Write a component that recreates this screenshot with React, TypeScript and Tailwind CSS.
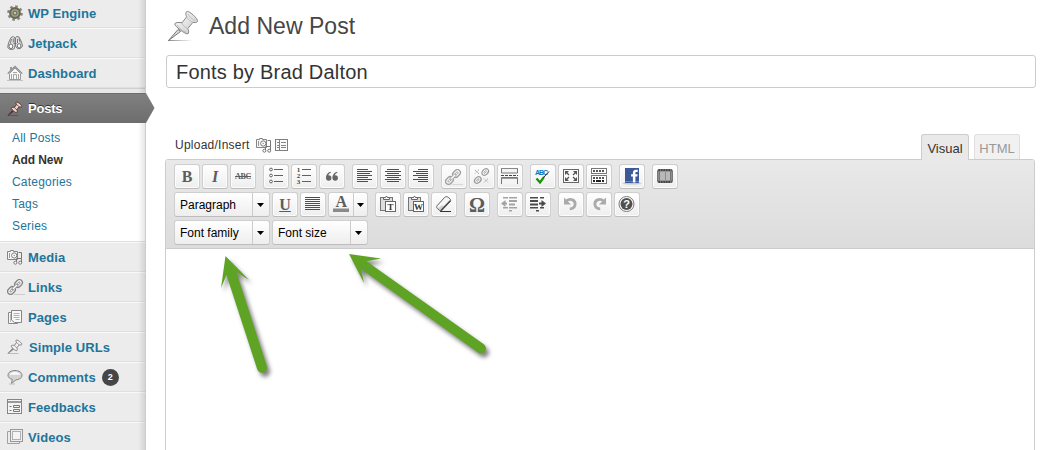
import React from "react";

type IconProps = { children: React.ReactNode; w?: number; h?: number };

const Svg = ({ children, w = 24, h = 23 }: IconProps) => (
  <svg width={w} height={h} viewBox={`0 0 ${w} ${h}`} fill="none" className="block shrink-0">
    {children}
  </svg>
);

/* ---------- sidebar icons (16 x 16) ---------- */

const Gear = () => (
  <Svg w={16} h={16}>
    <circle cx="8" cy="8" r="6.6" stroke="#85857e" strokeWidth="2.4" strokeDasharray="2.6 2.58" />
    <circle cx="8" cy="8" r="5" fill="#77776c" stroke="#66665e" strokeWidth="1.8" />
    <circle cx="8" cy="8" r="3.1" stroke="#a5a66f" strokeWidth="1.2" />
    <circle cx="8" cy="8" r="1.1" fill="#d6d6c4" />
  </Svg>
);

const Binoculars = () => (
  <Svg w={16} h={16}>
    <path d="M4 2.5l2.5-1 1.5 1.5v8l-1 3-4 .5-2.300-2L1.500 8zM9.500 1.500l2.500.5 2.500 5 1 4-2 2.500-3 .2-2-2.700V3z" fill="#e4e4e4" stroke="#7c7c7c" />
    <path d="M4.500 4L3.300 8.500M6.300 3.500v4M10.500 4v4M12 3.500l1.200 4M6.500 8.500h3" stroke="#777" />
    <ellipse cx="3.900" cy="11.300" rx="1.900" ry="2.300" fill="#fff" stroke="#6c6c6c" />
    <ellipse cx="12.100" cy="10.800" rx="1.800" ry="2.200" fill="#fff" stroke="#6c6c6c" />
  </Svg>
);

const House = () => (
  <Svg w={16} h={16}>
    <path d="M2.500 8.500v6h11v-6L8 3z" fill="#f7f7f7" stroke="#999" />
    <path d="M.7 8.600L8 1.500l7.300 7.100" stroke="#8c8c8c" strokeWidth="1.300" />
    <path d="M3.500 2v3.500M4.500 2v2.500" stroke="#999" />
    <path d="M6.500 14V9.500h3V14M4.500 9v5M11.500 9v5M6 7.500h4" stroke="#a5a5a5" />
    <path d="M0 15.500h16" stroke="#c3c3c3" />
  </Svg>
);

const Pin = ({ fill = "#f2f2f2", stroke = "#808080" }: { fill?: string; stroke?: string }) => (
  <Svg w={16} h={16}>
    <path d="M.5 14.500h11" stroke={stroke} opacity=".45" />
    <path d="M5.700 9.200L1.300 14.200l5-3.800z" fill={stroke} stroke={stroke} strokeWidth=".8" />
    <path d="M9.300 1.100c1-.8 6 3.200 5.600 4.300-.5.900-1.700.6-2.500.4L9.900 8.600c.5 1.200.5 2.700-.2 3.100-1 .4-6-3.800-5.500-4.800.4-.7 2.100-.8 3.100-.4l2.200-2.900c-.5-.7-.7-2-.2-2.500z" fill={fill} stroke={stroke} />
    <path d="M7.300 6.700l2.500 2M9.700 3.600l2.500 2.300" stroke={stroke} strokeWidth=".7" />
  </Svg>
);

const CameraNotes = () => (
  <Svg w={16} h={16}>
    <path d="M.5 2.500h3v-1h3v1h4v8H.5z" fill="#f5f5f5" stroke="#858585" />
    <circle cx="7.200" cy="6.500" r="2.600" fill="#fff" stroke="#7a7a7a" />
    <circle cx="7.200" cy="6.500" r=".8" fill="#999" />
    <path d="M2.500 4v5" stroke="#999" />
    <path d="M9.500 14V9.500h5V14M14.500 9.500v-6h-3" stroke="#777" />
    <circle cx="8.400" cy="13.700" r="1.500" fill="#fff" stroke="#777" />
    <circle cx="13.200" cy="13.700" r="1.500" fill="#fff" stroke="#777" />
  </Svg>
);

const Chain = ({ color = "#858585" }: { color?: string }) => (
  <Svg w={18} h={16}>
    <path d="M7 15.500h11" stroke={color} opacity=".3" />
    <g transform="rotate(-45 8 8)" stroke={color}>
      <rect x="-1.200" y="5" width="8.400" height="6" rx="3" strokeWidth="1.300" fill="#f4f4f4" />
      <rect x="1.200" y="7.200" width="3.600" height="1.600" rx=".8" strokeWidth=".9" />
      <rect x="8.800" y="5" width="8.400" height="6" rx="3" strokeWidth="1.300" fill="#f4f4f4" />
      <rect x="11.200" y="7.200" width="3.600" height="1.600" rx=".8" strokeWidth=".9" />
      <rect x="4.500" y="6.900" width="7" height="2.200" rx="1.100" fill="#fff" strokeWidth=".9" />
    </g>
  </Svg>
);

const Pages = () => (
  <Svg w={16} h={16}>
    <path d="M4 3.500H1.500v11h9V13" fill="#f4f4f4" stroke="#8a8a8a" />
    <path d="M4.500 1.500h10v12h-7l-3-2.500z" fill="#f8f8f8" stroke="#858585" />
    <path d="M6.500 4.500h6M6.500 6.500h6M6.500 8.500h6M8.500 10.500h4" stroke="#b0b0b0" />
    <path d="M3.500 5v8" stroke="#bbb" />
  </Svg>
);

const Bubble = () => (
  <Svg w={16} h={16}>
    <path d="M8 1.500c4 0 7 2 7 4.700s-2.700 4.500-6 4.600L4.500 14.500l.8-4.100C2.700 9.700 1 8.300 1 6.200 1 3.500 4 1.500 8 1.500z" fill="#d3d3d3" stroke="#858585" />
    <path d="M2.700 5.800C3.200 3.700 5.500 2.900 8 2.900s4.900 1 5.300 2.900z" fill="#fafafa" />
    <path d="M2 15h6" stroke="#bbb" />
  </Svg>
);

const FormIcon = () => (
  <Svg w={16} h={16}>
    <rect x=".5" y=".5" width="14" height="14" fill="#f4f4f4" stroke="#858585" />
    <path d="M1 2.500h13M1 3.500h13" stroke="#999" />
    <path d="M2.500 7.500h2M2.500 11.500h2" stroke="#777" />
    <path d="M6.500 6.500h6v2h-6zM6.500 10.500h6v2h-6z" stroke="#777" />
  </Svg>
);

const Frames = () => (
  <Svg w={16} h={16}>
    <path d="M3.500 2.500h-3v12h12v-2" stroke="#a0a0a0" />
    <rect x="3.500" y=".5" width="12" height="12" fill="#eee" stroke="#979797" />
    <rect x="5.500" y="2.500" width="8" height="8" fill="#f4f4f4" stroke="#b0b0b0" />
  </Svg>
);

/* ---------- sidebar ---------- */

const MenuRow = ({ icon, label, badge, indent }: { icon: React.ReactNode; label: string; badge?: string; indent?: boolean }) => (
  <div className="flex h-[30px] shrink-0 items-center border-t border-b border-t-[#f9f9f9] border-b-[#dfdfdf] bg-[#ececec] pl-[7px]">
    <span className="w-[18px] shrink-0">{icon}</span>
    <span className={`${indent ? "ml-1" : "ml-[3px]"} pt-[2px] whitespace-nowrap text-[13px] leading-[18px] font-bold tracking-[0.08px] text-[#21759b]`}>{label}</span>
    {badge && (
      <span className="mt-px ml-[6px] flex size-[17px] items-center justify-center rounded-full bg-[#464646] pt-px text-[9px] font-bold text-white">{badge}</span>
    )}
  </div>
);

const submenu = ["All Posts", "Add New", "Categories", "Tags", "Series"];

const Sidebar = () => (
  <aside className="relative -mt-[2px] flex h-[452px] w-[146px] shrink-0 flex-col border-r border-[#ccc] bg-white">
    <MenuRow icon={<Gear />} label="WP Engine" />
    <MenuRow icon={<Binoculars />} label="Jetpack" />
    <MenuRow icon={<House />} label="Dashboard" />
    <div className="h-[5px] shrink-0 border-t border-[#d0d0d0] bg-[#e8e8e8]" />
    <div className="z-10 flex h-[30px] shrink-0 items-center border-t border-[#6d6d6d] bg-linear-to-b from-[#808080] to-[#6d6d6d] pl-[7px]">
      <span className="w-[18px]"><Pin fill="#ecd3cd" stroke="#4d302d" /></span>
      <span className="ml-[3px] text-[13px] font-bold tracking-[-0.2px] text-white [text-shadow:0_-1px_0_#333]">Posts</span>
    </div>
    <svg className="absolute top-[95px] left-[145px] z-10" width="10" height="30" viewBox="0 0 10 30">
      <defs>
        <linearGradient id="tab" x1="0" x2="0" y1="0" y2="1">
          <stop stopColor="#808080" />
          <stop offset="1" stopColor="#6d6d6d" />
        </linearGradient>
      </defs>
      <path d="M0 0h1l8.500 15L1 30H0z" fill="url(#tab)" />
    </svg>
    <ul className="h-[119px] shrink-0 border-b border-[#dfdfdf] pt-1 pl-3 text-[12px] leading-[22px] tracking-[0.2px] text-[#21759b]">
      {submenu.map((s) => (
        <li key={s} className={s === "Add New" ? "font-bold tracking-[-0.1px] text-[#333]" : ""}>{s}</li>
      ))}
    </ul>
    <MenuRow icon={<CameraNotes />} label="Media" />
    <MenuRow icon={<Chain />} label="Links" />
    <MenuRow icon={<Pages />} label="Pages" />
    <MenuRow icon={<Pin />} label="Simple URLs" indent />
    <MenuRow icon={<Bubble />} label="Comments" badge="2" />
    <MenuRow icon={<FormIcon />} label="Feedbacks" />
    <MenuRow icon={<Frames />} label="Videos" />
    <div className="absolute inset-y-0 right-0 w-[7px] bg-linear-to-r from-black/0 to-black/10" />
  </aside>
);

/* ---------- toolbar ---------- */

const Btn = ({ children }: { children: React.ReactNode }) => (
  <div className="flex h-[25px] w-[26px] shrink-0 items-center justify-center rounded-[3px] border border-[#cfcfcf] border-b-[#bdbdbd] bg-linear-to-b from-white to-[#eee] shadow-[inset_0_0_0_1px_#fcfcfc]">
    {children}
  </div>
);

const Group = ({ children }: { children: React.ReactNode }) => <div className="flex gap-[2px]">{children}</div>;

const Caret = () => (
  <svg width="7" height="4" viewBox="0 0 7 4" className="block"><path d="M0 0h7L3.500 4z" fill="#000" /></svg>
);

const Select = ({ label }: { label: string }) => (
  <div className="flex h-[25px] w-[96px] shrink-0 rounded-[3px] border border-[#cfcfcf] border-b-[#bdbdbd] bg-linear-to-b from-white to-[#eee]">
    <span className="flex w-[78px] items-center border-r border-[#ccc] pl-[5px] text-[12px] whitespace-nowrap text-black">{label}</span>
    <span className="flex flex-1 items-center justify-center pt-px pr-px"><Caret /></span>
  </div>
);

const Glyph = ({ children, className }: { children: React.ReactNode; className: string }) => (
  <span className={`font-['Liberation_Serif',serif] text-[#5c5c5c] ${className}`}>{children}</span>
);

const Bold = () => <Glyph className="text-[16px] leading-[18px] font-bold">B</Glyph>;
const Italic = () => <Glyph className="text-[16px] leading-[18px] font-bold italic">I</Glyph>;
const Strike = () => <Glyph className="text-[8px] leading-[12px] font-bold tracking-[-0.3px] line-through">ABC</Glyph>;

const rows = [4.5, 10.5, 16.5];

const Bullets = () => (
  <Svg>
    {rows.map((y) => (
      <g key={y} stroke="#606060">
        <circle cx="7" cy={y} r="1.400" fill="#fff" />
        <path d={`M10 ${y}h9`} />
      </g>
    ))}
  </Svg>
);

const Numbers = () => (
  <Svg>
    <text fontSize="7" fontWeight="bold" fill="#444" fontFamily="Liberation Serif, serif">
      {rows.map((y, i) => (
        <tspan key={y} x="4.800" y={y + 2.4}>{i + 1}</tspan>
      ))}
    </text>
    {rows.map((y) => (
      <path key={y} d={`M10 ${y}h9`} stroke="#606060" />
    ))}
  </Svg>
);

const Quote = () => (
  <Svg>
    <g fill="#666">
      <circle cx="8.700" cy="13" r="2.700" />
      <circle cx="15.200" cy="13" r="2.700" />
      <path d="M6 13c0-3.300 1.500-5.600 4.700-6.300l.3.700c-1.800.8-2.700 1.900-2.900 3.800zM12.500 13c0-3.300 1.500-5.600 4.700-6.300l.3.700c-1.800.8-2.700 1.900-2.900 3.800z" />
    </g>
  </Svg>
);

const lineSets: Record<string, [number, number][]> = {
  left: [[4, 15], [4, 19], [4, 17], [4, 19], [4, 15], [4, 19], [4, 15]],
  center: [[6, 18], [4, 20], [6, 18], [4, 20], [6, 18], [4, 20], [6, 18]],
  right: [[9, 19], [4, 19], [7, 19], [4, 19], [9, 19], [4, 19], [9, 19]],
  full: [[4, 19], [4, 19], [4, 19], [4, 19], [4, 19], [4, 19], [4, 19]],
};

const Align = ({ kind }: { kind: string }) => (
  <Svg>
    {lineSets[kind].map(([a, b], i) => (
      <path key={i} d={`M${a} ${4.5 + i * 2}H${b}`} stroke="#4d4d4d" />
    ))}
  </Svg>
);

const Unlink = () => (
  <Svg>
    <g stroke="#999">
      <ellipse cx="15.200" cy="7" rx="3.700" ry="2.700" transform="rotate(-45 15.200 7)" strokeWidth="1.300" />
      <ellipse cx="15.200" cy="7" rx="1.500" ry=".8" transform="rotate(-45 15.200 7)" strokeWidth=".8" />
      <ellipse cx="7.800" cy="15" rx="3.700" ry="2.700" transform="rotate(-45 7.800 15)" strokeWidth="1.300" />
      <ellipse cx="7.800" cy="15" rx="1.500" ry=".8" transform="rotate(-45 7.800 15)" strokeWidth=".8" />
      <path d="M5 5l4 4M9 4.500L5 8.500M14 13.500l4 4M18 13.500l-4 4" strokeDasharray="1.500 .7" strokeWidth=".9" />
    </g>
  </Svg>
);

const More = () => (
  <Svg>
    <path d="M3.500 3v5h16V3M3.500 19v-6.500h16V19" fill="#f4f4f4" stroke="#777" />
    <path d="M3 3.500h17" stroke="#888" />
    <path d="M3 10.500h17" stroke="#444" strokeDasharray="3 1" />
    <path d="M4 13.500h15" stroke="#999" />
  </Svg>
);

const Spell = () => (
  <Svg>
    <text x="4" y="9.500" fontSize="7" fontWeight="bold" fill="#0878c0" fontFamily="Liberation Sans, sans-serif" textLength="13">ABC</text>
    <path d="M5.500 13.500l3.500 4 4-5.500" stroke="#159300" strokeWidth="2.200" />
    <path d="M12.500 12.500l5.500-6" stroke="#222" />
  </Svg>
);

const Fullscreen = () => (
  <Svg>
    <rect x="4.500" y="4.500" width="15" height="13" fill="#fafafa" stroke="#666" />
    <path d="M6 6h4L6 10zM18 6h-4l4 4zM6 16h4l-4-4zM18 16h-4l4-4z" fill="#555" />
    <path d="M7 7l3 3M17 7l-3 3M7 15l3-3M17 15l-3-3" stroke="#555" strokeWidth="1.300" />
  </Svg>
);

const Kitchen = () => (
  <Svg>
    <rect x="4.500" y="3.500" width="15" height="5" fill="#fff" stroke="#777" />
    <path d="M6 6h12" stroke="#555" strokeWidth="2" strokeDasharray="2 1" />
    <rect x="4.500" y="10.500" width="15" height="8" fill="#fff" stroke="#777" />
    <path d="M6 13h12" stroke="#555" strokeWidth="2" strokeDasharray="2 1" />
    <path d="M6 16h12" stroke="#222" strokeWidth="2" strokeDasharray="2 1 5 1" />
  </Svg>
);

const Facebook = () => (
  <Svg>
    <ellipse cx="12" cy="18.300" rx="9.500" ry="1.200" fill="#c9c9c9" />
    <rect x="5" y="3" width="14" height="15" fill="#3b5998" />
    <path d="M5 16h14v1H5z" fill="#6d84b4" />
    <path d="M12.900 17.500v-6h-1.800V9.300h1.800V7.800c0-2 1.200-3 3-3h1.800V7h-1.200c-.9 0-1.100.3-1.100 1v1.300h2.200l-.3 2.200h-1.900v6z" fill="#fff" />
  </Svg>
);

const Film = () => (
  <Svg>
    <rect x="4" y="4" width="16" height="14" rx="2.500" fill="#777" />
    <path d="M5.500 5h13M5.500 17h13" stroke="#333" strokeWidth="1.500" strokeDasharray="1.500 1" />
    <rect x="7" y="6.500" width="10" height="9" fill="#b8b8b8" />
    <path d="M5.500 7v8M12.500 6.500v9M18.500 7v8" stroke="#8d8d8d" />
  </Svg>
);

const TextColor = () => (
  <Svg w={22}>
    <text x="4.500" y="14" fontSize="16" fontWeight="bold" fill="#5c5c5c" fontFamily="Liberation Serif, serif">A</text>
    <rect x="2" y="15.500" width="16" height="3.500" fill="#8a8a8a" />
  </Svg>
);

const Paste = ({ letter }: { letter: string }) => (
  <Svg>
    <rect x="4.500" y="4.500" width="12" height="13" fill="#ddd" stroke="#757575" />
    <path d="M7.500 6.500v-2h2l1-1.500 1 1.500h2v2z" fill="#f4f4f4" stroke="#666" />
    <rect x="9.500" y="8.500" width="10" height="10" fill="#fff" stroke="#666" />
    <text x="14.500" y="16.500" textAnchor="middle" fontSize="9" fontWeight="bold" fill="#333" fontFamily="Liberation Serif, serif">{letter}</text>
  </Svg>
);

const Eraser = () => (
  <Svg>
    <path d="M8 18.500h11" stroke="#333" />
    <path d="M12.500 4.500L5 12.800c-.6.900-.3 2 .4 2.700l1.800 1.700c.9.700 2.100.6 2.900-.2l8.200-8.700c.6-.8.4-1.700-.2-2.300l-1.900-1.700c-1-.9-2.800-.8-3.700.2z" fill="#f6f6f6" stroke="#606060" />
    <path d="M10 12.300l-4.500 3.200 2 2 3 0 3.500-4z" fill="#8d8d8d" opacity=".35" />
    <path d="M8.800 17.700l9.500-10" stroke="#4c4c4c" strokeWidth="1.600" />
  </Svg>
);

const Omega = () => <Glyph className="text-[20px] leading-[20px] font-bold">Ω</Glyph>;

const Dent = ({ out }: { out?: boolean }) => (
  <Svg>
    <g fill={out ? "#a3a3a3" : "#4a4a4a"}>
      {out ? (
        <>
          <path d="M3 10.500L7.500 7v2.500H9v2H7.500V14z" />
          <path d="M5 4h5v1.500H5zM11 4h8v1.500h-8zM11 7h8v2h-8zM11 10.500h6v2h-6zM11 14h8v1.500h-8zM5 14h5v1.500H5zM11 17h3v1.500h-3z" />
        </>
      ) : (
        <>
          <path d="M20 10.500L15.500 7v2.500H13v2h2.500V14z" />
          <path d="M4 4h8v1.500H4zM14 4h4v1.500h-4zM4 7h8v2H4zM4 10.500h8v2H4zM4 14h8v1.500H4zM14 14h4v1.500h-4zM10 17h3v1.500h-3z" />
        </>
      )}
    </g>
  </Svg>
);

const UndoPath = () => (
  <g>
    <path d="M7.500 8c3.500-3.200 9.300-1 8.600 3.600-.4 2.600-2.400 4.200-5.300 4.200" stroke="#aaa" strokeWidth="2.800" />
    <path d="M5 4.500v7h7z" fill="#aaa" />
  </g>
);

const Undo = () => <Svg><UndoPath /></Svg>;
const Redo = () => <Svg><g transform="translate(24 0) scale(-1 1)"><UndoPath /></g></Svg>;

const Help = () => (
  <Svg>
    <circle cx="11.500" cy="11" r="7.500" fill="#fff" stroke="#777" />
    <circle cx="11.500" cy="11" r="6" fill="#505050" />
    <text x="11.500" y="15" textAnchor="middle" fontSize="11" fontWeight="bold" fill="#fff" fontFamily="Liberation Sans, sans-serif">?</text>
  </Svg>
);

const Toolbar = () => (
  <div className="flex h-[89px] flex-col gap-[3px] rounded-t-[3px] border-b border-[#ccc] bg-linear-to-b from-[#e9e9e9] to-[#dcdcdc] pt-1 pl-2">
    <div className="flex gap-[7px]">
      <Group><Btn><Bold /></Btn><Btn><Italic /></Btn><Btn><Strike /></Btn></Group>
      <Group><Btn><Bullets /></Btn><Btn><Numbers /></Btn><Btn><Quote /></Btn></Group>
      <Group><Btn><Align kind="left" /></Btn><Btn><Align kind="center" /></Btn><Btn><Align kind="right" /></Btn></Group>
      <Group><Btn><Chain color="#a0a0a0" /></Btn><Btn><Unlink /></Btn><Btn><More /></Btn></Group>
      <Group><Btn><Spell /></Btn><Btn><Fullscreen /></Btn><Btn><Kitchen /></Btn></Group>
      <Btn><Facebook /></Btn>
      <Btn><Film /></Btn>
    </div>
    <div className="flex gap-[7px]">
      <Group>
        <Select label="Paragraph" />
        <Btn><Glyph className="text-[16px] leading-[18px] font-bold underline">U</Glyph></Btn>
        <Btn><Align kind="full" /></Btn>
        <div className="flex h-[25px] w-[40px] rounded-[3px] border border-[#cfcfcf] border-b-[#bdbdbd] bg-linear-to-b from-white to-[#eee]">
          <span className="w-[25px] border-r border-[#ccc] pl-[2px]"><TextColor /></span>
          <span className="flex flex-1 items-center justify-center pt-px pr-px"><Caret /></span>
        </div>
      </Group>
      <Group><Btn><Paste letter="T" /></Btn><Btn><Paste letter="W" /></Btn><Btn><Eraser /></Btn></Group>
      <Btn><Omega /></Btn>
      <Group><Btn><Dent out /></Btn><Btn><Dent /></Btn></Group>
      <Group><Btn><Undo /></Btn><Btn><Redo /></Btn><Btn><Help /></Btn></Group>
    </div>
    <Group><Select label="Font family" /><Select label="Font size" /></Group>
  </div>
);

const LargePin = () => (
  <svg width="32" height="32" viewBox="0 0 32 32" fill="none" className="block">
    <defs>
      <linearGradient id="pin" x1="0" x2="1" y1="0" y2="1">
        <stop stopColor="#fff" />
        <stop offset="1" stopColor="#c8c8c8" />
      </linearGradient>
      <linearGradient id="ground" x1="0" x2="1">
        <stop stopColor="#888" />
        <stop offset="1" stopColor="#fff" />
      </linearGradient>
    </defs>
    <rect x="1" y="30" width="25" height="1" fill="url(#ground)" />
    <path d="M11 19.500L1.500 30.500l12-9z" fill="#ddd" stroke="#777" />
    <path d="M19.500 1.700c2-2 12 7.300 11 9.800-.8 1.600-3.500 1-4.500.8l-5.200 6.200c1 2.200 1.200 4.600.2 5.300-2.200 1-14-7.800-13.200-10.100.8-1.500 5-1.500 7.200-.9l4.700-6c-1-1.600-1.100-4.100-.2-5.100z" fill="url(#pin)" stroke="#868686" />
    <path d="M14.800 13c1 2.500 3.500 4.700 6 5.500M19.700 7c1.200 2.200 3.800 4.500 6.300 5.300M21 4c1 2.500 4.500 5.700 7.500 6.700M10 15c2 3 6 6 9.500 7.300" stroke="#b8b8b8" strokeWidth=".9" />
  </svg>
);

const Arrows = () => (
  <svg
    width="300"
    height="140"
    viewBox="200 245 300 140"
    className="absolute top-[245px] left-[200px] drop-shadow-[3px_4px_2px_rgba(0,0,0,0.5)]"
    fill="#5fa325"
  >
    <path d="M225.500 256L249 280l-12.700-8 30.500 94a5 5 0 0 1-9.600 3.300L226.500 275 221 288z" />
    <path d="M349 254l32 4.500-14.500 2.700 117.300 83.100a5 5 0 0 1-5.800 8.200L361 269l3 14z" />
  </svg>
);

export default function App() {
  return (
    <div className="relative flex h-[450px] w-[1050px] overflow-hidden bg-white font-['Liberation_Sans',Arial,sans-serif]">
      <Sidebar />
      <main className="flex min-w-0 flex-1 flex-col">
        <div className="flex h-[55px] shrink-0 items-center pl-[21px]">
          <span className="mt-[-3px]"><LargePin /></span>
          <h1 className="mt-[-2px] ml-[10px] text-[23px] font-normal tracking-[0.03px] text-[#464646]">Add New Post</h1>
        </div>
        <div className="ml-5 flex h-[33px] w-[870px] shrink-0 items-center rounded-[3px] border border-[#ccc] pt-px pl-[9px] text-[20px] tracking-[0.2px] text-[#333]">Fonts by Brad Dalton</div>
        <div className="mt-[46px] ml-[19px] flex h-[25px] w-[870px] shrink-0 items-end justify-between pl-[10px] text-[12px] text-[#333]">
          <div className="flex items-center gap-[6px] pb-[5px] tracking-[0.25px]">
            Upload/Insert
            <span className="flex gap-[3px]"><CameraNotes /><svg width="14" height="16" viewBox="0 0 14 16" fill="none">
              <rect x=".5" y="2.500" width="12" height="11" fill="#fafafa" stroke="#808080" />
              <path d="M2 5.500h2M2 8.500h2M2 10.500h2M6 5.500h5M6 8.500h5M6 10.500h5M4.500 3v10" stroke="#858585" />
            </svg></span>
          </div>
          <div className="z-10 mb-[-1px] flex items-end gap-[5px] pr-[15px] text-[13px]">
            <span className="flex h-[26px] w-[48px] items-center justify-center rounded-t-[3px] border border-b-0 border-[#ccc] bg-[#e9e9e9] pt-[2px]">Visual</span>
            <span className="mb-[1px] flex h-[25px] w-[46px] items-center justify-center rounded-t-[3px] border border-b-0 border-[#dfdfdf] bg-[#f1f1f1] pt-[3px] text-[#999]">HTML</span>
          </div>
        </div>
        <div className="ml-[19px] h-[300px] w-[870px] shrink-0 rounded-t-[3px] border border-[#ccc]">
          <Toolbar />
        </div>
      </main>
      <Arrows />
    </div>
  );
}
